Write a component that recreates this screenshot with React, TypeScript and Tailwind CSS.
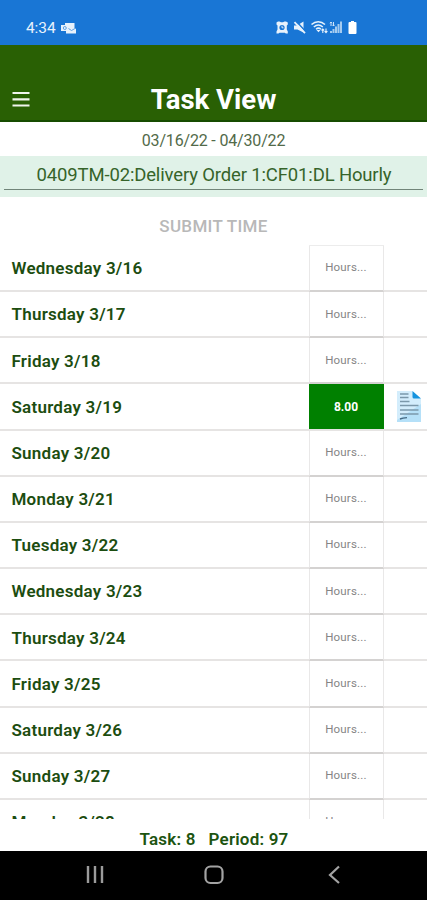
type Day = {
  label: string
  hours?: string
}

const days: Day[] = [
  { label: 'Wednesday 3/16' },
  { label: 'Thursday 3/17' },
  { label: 'Friday 3/18' },
  { label: 'Saturday 3/19', hours: '8.00' },
  { label: 'Sunday 3/20' },
  { label: 'Monday 3/21' },
  { label: 'Tuesday 3/22' },
  { label: 'Wednesday 3/23' },
  { label: 'Thursday 3/24' },
  { label: 'Friday 3/25' },
  { label: 'Saturday 3/26' },
  { label: 'Sunday 3/27' },
  { label: 'Monday 3/28' },
]

function OutlookIcon() {
  return (
    <svg className="ml-[5px] h-3 w-[15px]" viewBox="0 0 15 12" fill="none">
      <path d="M4 1h9.500v5l1.500 1v4.500H5V9H0V3h4z" fill="#e8f2fc" />
      <circle cx="3.800" cy="6" r="1.500" stroke="#4f97e0" strokeWidth="0.9" />
      <path d="M7.500 6.500l3 2 3.500-2" stroke="#4f97e0" strokeWidth="0.9" />
    </svg>
  )
}

function StatusIcons() {
  return (
    <svg className="h-4 w-[84px]" viewBox="0 0 84 16" fill="none">
      {/* alarm */}
      <path d="M1.500 2.600 3 1.500h1.500L6 2.200h2l1.500-.7H11l1.800 1.100v1.900l-1 1v4l1 2v2h-2l-1-.8H4.500l-1 .8h-2v-2l1-2v-4l-1-1z" fill="#e8f2fc" />
      <circle cx="7" cy="7.500" r="2.600" fill="#1976d5" />
      <path d="M7 5.800v2h1.500" stroke="#e8f2fc" strokeWidth="0.9" />
      {/* muted speaker */}
      <path d="M19 5.500h3L28.500 1.500v11L22.500 9.500H19z" fill="#e8f2fc" />
      <path d="m21.500 1.500 9.500 10.500" stroke="#1976d5" strokeWidth="1.500" />
      <path d="m19.500 2.200 10.500 11" stroke="#e8f2fc" strokeWidth="1.800" />
      {/* wifi */}
      <path d="M36.500 4.500c4-3.800 9.500-3.800 13.500 0M38.800 7c3-2.600 6-2.600 9 0M41 9.200c1.600-1.400 3.400-1.400 5 0" stroke="#e8f2fc" strokeWidth="1.500" />
      <path d="m41.500 10 2 2.300 2-2.300z" fill="#e8f2fc" />
      <path d="M47.800 13V9m-1.400 1.300L47.800 9l1.400 1.300M51 8.500v4m-1.400-1.300 1.400 1.400 1.400-1.400" stroke="#e8f2fc" strokeWidth="1.100" />
      {/* mobile signal */}
      <path d="M56 13v-2M58.500 13V9M61 13V6.500M63.500 13V4M66 13V1.500" stroke="#a5cbf0" strokeWidth="2" />
      <path d="M56 2v4m-1.200-2.800L56 2l1.200 1.200M58.500 2v4m-1.200-1.200L58.500 6l1.200-1.200" stroke="#cfe3f8" strokeWidth="1" />
      {/* battery */}
      <path d="M76 1h3v1h1.500q1 0 1 1v10q0 1-1 1h-6q-1 0-1-1V3q0-1 1-1H76z" fill="#fff" />
    </svg>
  )
}

function NoteIcon() {
  return (
    <svg className="h-[33px] w-[26px]" viewBox="0 0 26 33" fill="none">
      <path d="M1 1h15l9 8v23H1z" fill="#d3edfc" />
      <path d="M25 14v18H1v-2z" fill="#b5e0f8" />
      <path d="M16.500 1 25 8.500h-7q-1.500 0-1.500-1.500z" fill="#1593de" />
      <path d="M4 4h8.500M4 7.500h8.500M4 11.500h9.500M4 15.500h18.500M4 20h18.500M4 24h18.500" stroke="#7b98aa" strokeWidth="1.3" />
      <path d="m4 29 3-.8 4-.5" stroke="#456983" strokeWidth="1.3" />
    </svg>
  )
}

function DayRow({ day }: { day: Day }) {
  return (
    <div className="flex h-[46.17px] shrink-0 border-b-2 border-[#e6e4e3]">
      <div className="flex w-[309px] items-center pt-[2px] pl-[11.5px] text-[17px] font-semibold tracking-[0.24px] text-[#1c4d10]">
        {day.label}
      </div>
      {day.hours ? (
        <div className="flex w-[75px] items-center justify-center bg-[#008000] pr-px text-[12px] font-bold text-white">
          {day.hours}
        </div>
      ) : (
        <div className="-mb-0.5 flex w-[75px] items-center justify-center border-x border-b-2 border-x-[#e9e8e8] border-b-[#d4d2d1] pr-px text-[11.5px] tracking-[0.2px] text-[#858585]">
          Hours...
        </div>
      )}
      {day.hours && (
        <div className="flex flex-1 items-center justify-center pl-[7px]">
          <NoteIcon />
        </div>
      )}
    </div>
  )
}

function App() {
  return (
    <div className="flex h-[900px] w-[427px] flex-col overflow-hidden bg-white font-['Roboto','Liberation_Sans',sans-serif]">
      <div className="flex h-[45px] shrink-0 items-center bg-[#1976d5] pt-[11px] pl-[26px] text-[15.5px] text-[#e8f2fc]">
        <span className="pt-px tracking-[-0.1px]">4:34</span>
        <OutlookIcon />
        <div className="ml-auto pr-[68px]">
          <StatusIcons />
        </div>
      </div>

      <header className="grid h-[77px] shrink-0 grid-cols-[60px_1fr_60px] items-center border-b-2 border-[#174c00] bg-[#296004] pt-[33px]">
        <svg className="ml-3 h-[18px] w-[18px]" viewBox="0 0 18 18" stroke="#f0f5ed" strokeWidth="2.2">
          <path d="M.5 3h17M.5 9.300h17M.5 15.500h17" />
        </svg>
        <h1 className="pt-0.5 text-center text-[27.5px] leading-none font-bold text-white">Task View</h1>
      </header>

      <div className="flex h-[34px] shrink-0 items-center justify-center pt-[3px] text-[16px] tracking-[-0.17px] text-[#526a49]">
        03/16/22 - 04/30/22
      </div>
      <div className="h-[41px] shrink-0 bg-[#e0f2e8] px-1 pt-[5px]">
        <div className="flex h-[29px] items-center justify-center border-b border-[#718579] pt-[2px] pl-px text-[18.5px] tracking-[-0.15px] whitespace-nowrap text-[#36642a]">
          0409TM-02:Delivery Order 1:CF01:DL Hourly
        </div>
      </div>
      <div className="flex h-12 shrink-0 items-center justify-center pt-[11px] text-[17px] font-medium tracking-[0.3px] text-[#b8b8b8]">
        SUBMIT TIME
      </div>

      <main className="flex h-[574px] shrink-0 flex-col overflow-hidden">
        <div className="ml-[309px] h-px w-[75px] shrink-0 bg-[#ececec]" />
        {days.map((day) => (
          <DayRow key={day.label} day={day} />
        ))}
      </main>

      <footer className="flex h-8 shrink-0 items-center justify-center gap-[13px] pt-[10px] pl-px text-[17px] font-semibold tracking-[0.2px] text-[#1c5410]">
        <span>Task: 8</span>
        <span>Period: 97</span>
      </footer>

      <nav className="flex h-[49px] shrink-0 items-center bg-black pb-px pl-[85px]">
        <svg className="h-5 w-5" viewBox="0 0 20 20" stroke="#9b9b9b" strokeWidth="2.4">
          <path d="M3 1v17M10 1v17M17 1v17" />
        </svg>
        <svg className="ml-[99px] h-5 w-5" viewBox="0 0 20 20" fill="none" stroke="#a3a3a3" strokeWidth="2.2">
          <rect x="1.5" y="1.5" width="17" height="16.5" rx="5" />
        </svg>
        <svg className="ml-[101px] h-5 w-5" viewBox="0 0 20 20" fill="none" stroke="#a3a3a3" strokeWidth="2.2">
          <path d="m14 1.500-9 8.500 9 8" />
        </svg>
      </nav>
    </div>
  )
}

export default App
